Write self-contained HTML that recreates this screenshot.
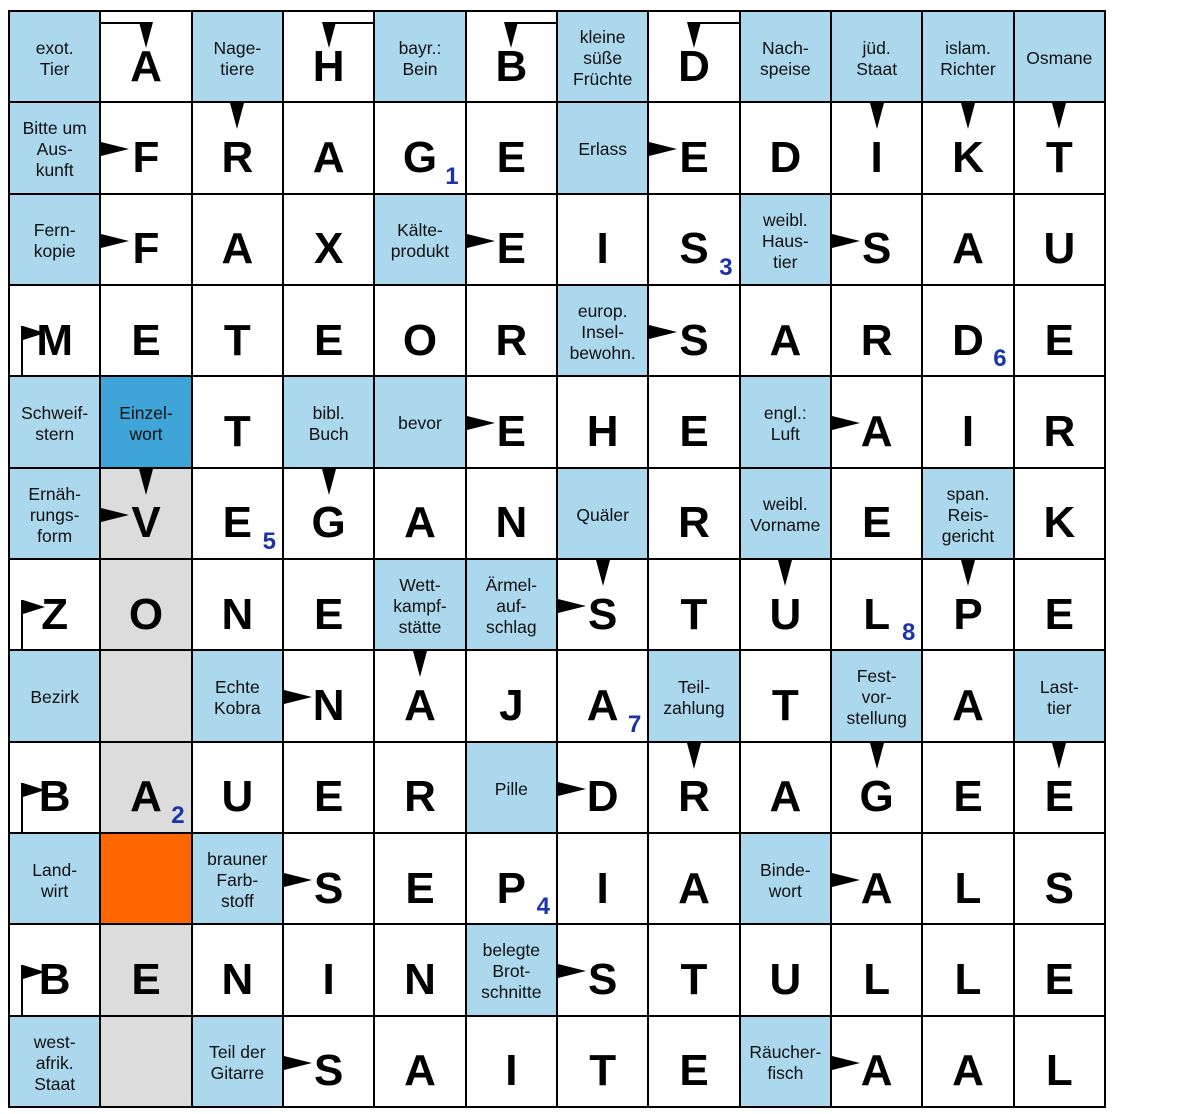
<!DOCTYPE html>
<html><head><meta charset="utf-8"><style>
body{margin:0;background:#fff;width:1200px;height:1114px;position:relative;overflow:hidden;font-family:"Liberation Sans",sans-serif}
#g{position:absolute;left:8px;top:10px;width:1094px;height:1094px;border:2px solid #000;background:#000;display:grid;grid-template-columns:repeat(12,1fr);grid-template-rows:repeat(12,1fr);gap:2px}
#g>div{background:#fff;position:relative;display:flex;align-items:center;justify-content:center;text-align:center;font-weight:bold;font-size:44px;padding-top:20px;box-sizing:border-box;color:#000}
#g>div.c,#g>div.d{background:#acd8ee;font-weight:normal;font-size:17.5px;line-height:21px;padding-top:4px;color:#111}
#g>div.d{background:#3fa4d8}
#g>div.gr{background:#dcdcdc}
#g>div.o{background:#ff6600}
.ad{position:absolute;top:0;left:50%;margin-left:-7px;width:0;height:0;border-left:7px solid transparent;border-right:7px solid transparent;border-top:26px solid #000}
.ar{position:absolute;left:0;top:39px;width:0;height:0;border-top:7px solid transparent;border-bottom:7px solid transparent;border-left:28px solid #000}
.fl{position:absolute;left:11px;top:40px;width:2px;height:52px;background:#000}
.fl::after{content:"";position:absolute;left:2px;top:0;border-top:7px solid transparent;border-bottom:7px solid transparent;border-left:22px solid #000}
.n{position:absolute;right:6px;bottom:2px;font-size:24px;color:#1a35a8;font-weight:bold}
.bl{position:absolute;top:10px;height:2px;background:#000}
.ad2{position:absolute;top:10px;left:50%;margin-left:-7px;width:0;height:0;border-left:7px solid transparent;border-right:7px solid transparent;border-top:26px solid #000}
</style></head><body>
<div id="g">
<div class="c">exot.<br>Tier</div>
<div><span class="bl" style="left:0;width:46px"></span><span class="ad2"></span>A</div>
<div class="c">Nage-<br>tiere</div>
<div><span class="bl" style="left:45px;right:0"></span><span class="ad2"></span>H</div>
<div class="c">bayr.:<br>Bein</div>
<div><span class="bl" style="left:45px;right:0"></span><span class="ad2"></span>B</div>
<div class="c">kleine<br>süße<br>Früchte</div>
<div><span class="bl" style="left:45px;right:0"></span><span class="ad2"></span>D</div>
<div class="c">Nach-<br>speise</div>
<div class="c">jüd.<br>Staat</div>
<div class="c">islam.<br>Richter</div>
<div class="c">Osmane</div>

<div class="c">Bitte um<br>Aus-<br>kunft</div>
<div><span class="ar"></span>F</div>
<div><span class="ad"></span>R</div>
<div>A</div>
<div>G<span class="n">1</span></div>
<div>E</div>
<div class="c">Erlass</div>
<div><span class="ar"></span>E</div>
<div>D</div>
<div><span class="ad"></span>I</div>
<div><span class="ad"></span>K</div>
<div><span class="ad"></span>T</div>

<div class="c">Fern-<br>kopie</div>
<div><span class="ar"></span>F</div>
<div>A</div>
<div>X</div>
<div class="c">Kälte-<br>produkt</div>
<div><span class="ar"></span>E</div>
<div>I</div>
<div>S<span class="n">3</span></div>
<div class="c">weibl.<br>Haus-<br>tier</div>
<div><span class="ar"></span>S</div>
<div>A</div>
<div>U</div>

<div><span class="fl"></span>M</div>
<div>E</div>
<div>T</div>
<div>E</div>
<div>O</div>
<div>R</div>
<div class="c">europ.<br>Insel-<br>bewohn.</div>
<div><span class="ar"></span>S</div>
<div>A</div>
<div>R</div>
<div>D<span class="n">6</span></div>
<div>E</div>

<div class="c">Schweif-<br>stern</div>
<div class="d">Einzel-<br>wort</div>
<div>T</div>
<div class="c">bibl.<br>Buch</div>
<div class="c">bevor</div>
<div><span class="ar"></span>E</div>
<div>H</div>
<div>E</div>
<div class="c">engl.:<br>Luft</div>
<div><span class="ar"></span>A</div>
<div>I</div>
<div>R</div>

<div class="c">Ernäh-<br>rungs-<br>form</div>
<div class="gr"><span class="ar"></span><span class="ad"></span>V</div>
<div>E<span class="n">5</span></div>
<div><span class="ad"></span>G</div>
<div>A</div>
<div>N</div>
<div class="c">Quäler</div>
<div>R</div>
<div class="c">weibl.<br>Vorname</div>
<div>E</div>
<div class="c">span.<br>Reis-<br>gericht</div>
<div>K</div>

<div><span class="fl"></span>Z</div>
<div class="gr">O</div>
<div>N</div>
<div>E</div>
<div class="c">Wett-<br>kampf-<br>stätte</div>
<div class="c">Ärmel-<br>auf-<br>schlag</div>
<div><span class="ar"></span><span class="ad"></span>S</div>
<div>T</div>
<div><span class="ad"></span>U</div>
<div>L<span class="n">8</span></div>
<div><span class="ad"></span>P</div>
<div>E</div>

<div class="c">Bezirk</div>
<div class="gr"></div>
<div class="c">Echte<br>Kobra</div>
<div><span class="ar"></span>N</div>
<div><span class="ad"></span>A</div>
<div>J</div>
<div>A<span class="n">7</span></div>
<div class="c">Teil-<br>zahlung</div>
<div>T</div>
<div class="c">Fest-<br>vor-<br>stellung</div>
<div>A</div>
<div class="c">Last-<br>tier</div>

<div><span class="fl"></span>B</div>
<div class="gr">A<span class="n">2</span></div>
<div>U</div>
<div>E</div>
<div>R</div>
<div class="c">Pille</div>
<div><span class="ar"></span>D</div>
<div><span class="ad"></span>R</div>
<div>A</div>
<div><span class="ad"></span>G</div>
<div>E</div>
<div><span class="ad"></span>E</div>

<div class="c">Land-<br>wirt</div>
<div class="o"></div>
<div class="c">brauner<br>Farb-<br>stoff</div>
<div><span class="ar"></span>S</div>
<div>E</div>
<div>P<span class="n">4</span></div>
<div>I</div>
<div>A</div>
<div class="c">Binde-<br>wort</div>
<div><span class="ar"></span>A</div>
<div>L</div>
<div>S</div>

<div><span class="fl"></span>B</div>
<div class="gr">E</div>
<div>N</div>
<div>I</div>
<div>N</div>
<div class="c">belegte<br>Brot-<br>schnitte</div>
<div><span class="ar"></span>S</div>
<div>T</div>
<div>U</div>
<div>L</div>
<div>L</div>
<div>E</div>

<div class="c">west-<br>afrik.<br>Staat</div>
<div class="gr"></div>
<div class="c">Teil der<br>Gitarre</div>
<div><span class="ar"></span>S</div>
<div>A</div>
<div>I</div>
<div>T</div>
<div>E</div>
<div class="c">Räucher-<br>fisch</div>
<div><span class="ar"></span>A</div>
<div>A</div>
<div>L</div>
</div>
</body></html>
